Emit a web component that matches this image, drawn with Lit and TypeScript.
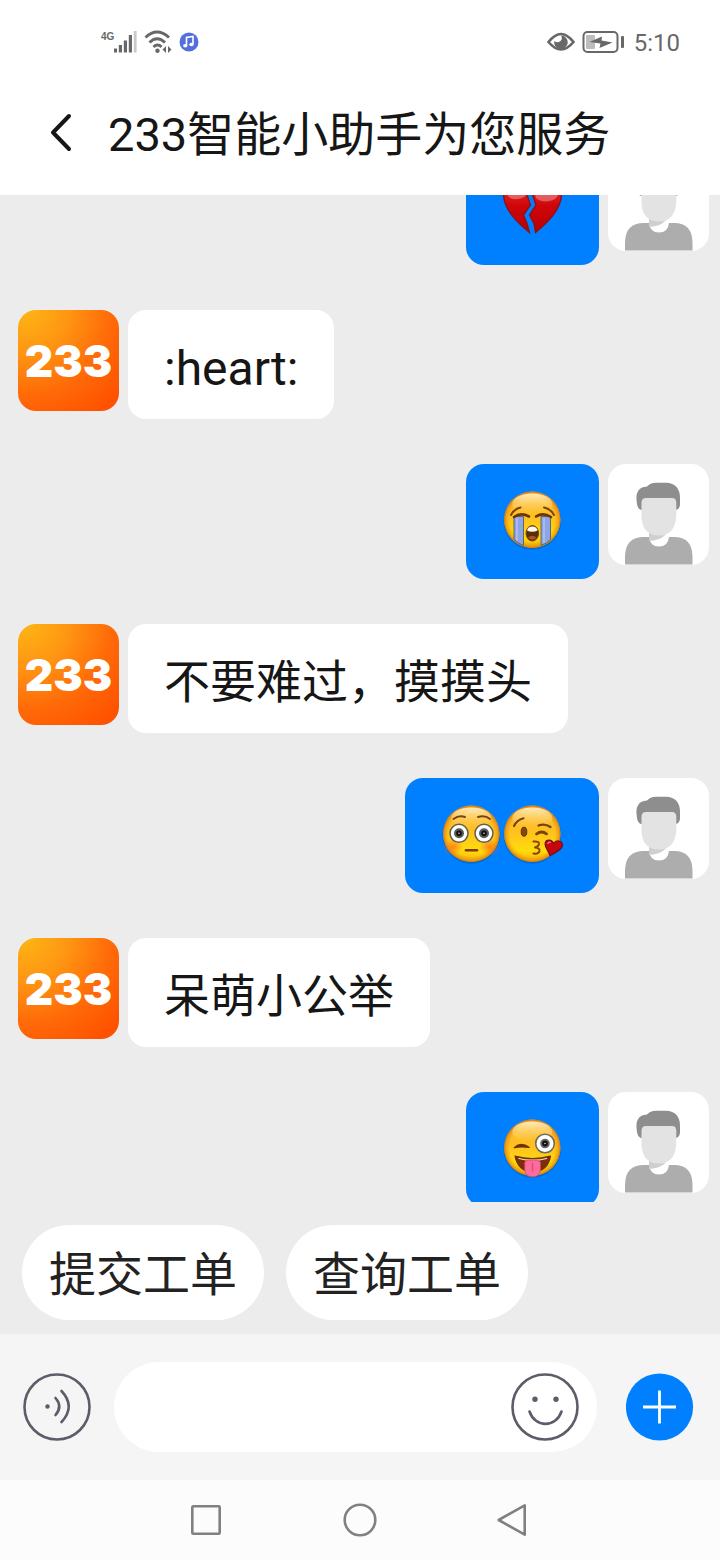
import { LitElement, html, svg, css, TemplateResult } from "lit";
import { customElement, property, state } from "lit/decorators.js";
import { classMap } from "lit/directives/class-map.js";

type EmojiName = "broken-heart" | "sob" | "flushed" | "kiss" | "wink-tongue";

interface Message {
  from: "bot" | "user";
  text?: string;
  emoji?: EmojiName[];
}

const MESSAGES: Message[] = [
  { from: "user", emoji: ["broken-heart"] },
  { from: "bot", text: ":heart:" },
  { from: "user", emoji: ["sob"] },
  { from: "bot", text: "不要难过，摸摸头" },
  { from: "user", emoji: ["flushed", "kiss"] },
  { from: "bot", text: "呆萌小公举" },
  { from: "user", emoji: ["wink-tongue"] },
];

const QUICK_ACTIONS = ["提交工单", "查询工单"];

const face = svg`
  <circle cx="30.3" cy="30" r="28.8" fill="#0a4a90" opacity="0.4"/>
  <circle cx="30.3" cy="28.8" r="28.2" fill="url(#skin)"/>
  <circle cx="30.3" cy="28.8" r="28.2" fill="url(#rim)"/>
  <ellipse cx="30.3" cy="13" rx="20" ry="10.5" fill="url(#shine)"/>`;

const EMOJI: Record<EmojiName, TemplateResult> = {
  "broken-heart": svg`
    <path d="M27.500 55.500C16 46 2 33 1.6 18C1.4 8 8 3 15 3C20 3 24 5 26 9L25 18L28.500 28L21.500 38L25 46.500Z" fill="url(#red)" stroke="#8e1019" stroke-width="1.4"/>
    <path d="M33.500 55.500C45 46 59 33 59.400 18C59.600 8 53 3 46 3C40 3 34 5 31 10L30.500 18L34 28L27.500 38L32 46.500Z" fill="url(#red)" stroke="#8e1019" stroke-width="1.4"/>
    <path d="M5 17C5 9 10 6 15 6C20 6 23 9 23 13L23.500 19C16 24 7 23 5 17Z" fill="#fff" opacity="0.3"/>
    <path d="M33 17C33 9 40 6 46 6C52 6 57 10 56 18C53 26 38 26 34 21Z" fill="#fff" opacity="0.3"/>`,
  sob: svg`
    ${face}
    <path d="M12 25.500H21.500V54.500Q16 52.500 12 48.500Z" fill="#8fa4e6" stroke="#5f6a62" stroke-width="1"/>
    <path d="M39 25.500H48.500V48.500Q45 52.500 39 54.500Z" fill="#8fa4e6" stroke="#5f6a62" stroke-width="1"/>
    <path d="M15 27V50M42 27V52" stroke="#b3c2f5" stroke-width="2" opacity="0.7"/>
    <path d="M12 26Q19 21 27 25.500M34 25.500Q41 21 49 26" fill="none" stroke="#6b3306" stroke-width="2.600" stroke-linecap="round"/>
    <path d="M9 24Q12 18 18.500 16.500M42 16.500Q49 18 52 24" fill="none" stroke="#7a430c" stroke-width="2" stroke-linecap="round"/>
    <ellipse cx="30.300" cy="42.300" rx="6.300" ry="7.700" fill="#5c2c0a" stroke="#7a430c"/>
    <path d="M25 39.500Q26 35.500 30.300 35.500Q34.600 35.500 35.600 39.500Q30.300 42 25 39.500Z" fill="#fffdf2"/>
    <path d="M26 46.500Q30 43 34.600 46.500Q30.500 51 26 46.500Z" fill="#a8581c"/>`,
  flushed: svg`
    ${face}
    <ellipse cx="12" cy="42" rx="10" ry="9" fill="url(#blush)"/>
    <ellipse cx="48.500" cy="42" rx="10" ry="9" fill="url(#blush)"/>
    <circle cx="18" cy="28.300" r="9" fill="#fff" stroke="#5f5f50" stroke-width="1.500"/>
    <circle cx="43" cy="28.300" r="9" fill="#fff" stroke="#5f5f50" stroke-width="1.500"/>
    <circle cx="18" cy="28.300" r="5" fill="#56595c"/><circle cx="18" cy="28.300" r="2.800" fill="#15100c"/>
    <circle cx="43" cy="28.300" r="5" fill="#56595c"/><circle cx="43" cy="28.300" r="2.800" fill="#15100c"/>
    <circle cx="18" cy="28.300" r="0.700" fill="#fff"/><circle cx="43" cy="28.300" r="0.700" fill="#fff"/>
    <path d="M12.500 14Q18 10 24 12M37 12Q44 10 49 14" fill="none" stroke="#7a430c" stroke-width="2" stroke-linecap="round"/>
    <path d="M25 45.300H36" stroke="#7a3a0a" stroke-width="2.600" stroke-linecap="round"/>`,
  kiss: svg`
    ${face}
    <ellipse cx="22" cy="26.700" rx="2.800" ry="4.500" fill="#84480c" stroke="#5e3008"/>
    <path d="M12 21Q15 15 21.500 13.300M36.500 20.500Q43 18 48.500 22" fill="none" stroke="#7a430c" stroke-width="2.200" stroke-linecap="round"/>
    <path d="M34.500 29Q39.500 25 44.500 28.800" fill="none" stroke="#7a430c" stroke-width="2.800" stroke-linecap="round"/>
    <path d="M31.500 36.500Q37.500 36 37 39Q36.500 41.500 33 42.500Q38 43 37.500 46Q36.500 49.500 31.500 48.500" fill="none" stroke="#85450c" stroke-width="2" stroke-linecap="round" stroke-linejoin="round"/>
    <path d="M48 50.500C46 45 42.500 42 43.200 38C44 34 50 34 51.500 38.500C54 34.500 60 35.500 60.500 39.500C60.800 44 54 47.500 48 50.500Z" fill="#c8040c" stroke="#721218" stroke-width="1.200"/>
    <path d="M45.500 39Q46.500 36.500 49 37.500" stroke="#f0807c" stroke-width="1.200" fill="none"/>`,
  "wink-tongue": svg`
    ${face}
    <path d="M12.500 28.500Q19 22.500 27 28.300Q19 27 12.500 28.500Z" fill="#6b3306" stroke="#6b3306" stroke-width="1.500" stroke-linejoin="round"/>
    <circle cx="43" cy="24.500" r="9.300" fill="#fff" stroke="#6d6d5a" stroke-width="1.600"/>
    <circle cx="43" cy="24.500" r="4.800" fill="#66696c"/><circle cx="43" cy="24.500" r="2.900" fill="#15100c"/>
    <circle cx="43" cy="24.500" r="0.700" fill="#fff"/>
    <path d="M13 37Q30.500 42 48.500 37Q46 52.500 30.500 53Q16 52.500 13 37Z" fill="#7c2d0a" stroke="#6b3306" stroke-width="1.200" stroke-linejoin="round"/>
    <path d="M16 38.700Q30.500 42.500 45.500 38.700L44.800 40Q30.500 44 16.800 40Z" fill="#f5dfb0"/>
    <path d="M22.800 43Q26 40 30.500 41.500Q35 40 38.300 43V51Q37.500 57.800 30.500 57.800Q23.500 57.800 22.800 51Z" fill="#ff6c9c" stroke="#d94a78" stroke-width="0.800"/>
    <path d="M30.500 44V52" stroke="#dd4b7e" stroke-width="1.400" stroke-linecap="round"/>`,
};

@customElement("chat-emoji")
export class ChatEmoji extends LitElement {
  @property() name: EmojiName = "sob";

  static styles = css`
    :host { display: block; width: 61px; height: 61px; }
    .art { display: block; width: 100%; height: 100%; overflow: visible; }
  `;

  render() {
    return html`<svg class="art" viewBox="0 0 61 61" role="img" aria-label=${this.name}>
      <defs>
        <linearGradient id="skin" x1="0" y1="0" x2="0" y2="1">
          <stop offset="0" stop-color="#fdb634"/>
          <stop offset="0.45" stop-color="#fec020"/>
          <stop offset="0.8" stop-color="#ffdc0a"/>
          <stop offset="1" stop-color="#f8b010"/>
        </linearGradient>
        <radialGradient id="rim">
          <stop offset="0.8" stop-color="#e8860c" stop-opacity="0"/>
          <stop offset="0.94" stop-color="#e8860c" stop-opacity="0.6"/>
          <stop offset="1" stop-color="#b8701c" stop-opacity="0.95"/>
        </radialGradient>
        <linearGradient id="shine" x1="0" y1="0" x2="0" y2="1">
          <stop offset="0" stop-color="#fff3cf" stop-opacity="0.9"/>
          <stop offset="1" stop-color="#ffd66a" stop-opacity="0"/>
        </linearGradient>
        <linearGradient id="red" x1="0" y1="0" x2="0" y2="1">
          <stop offset="0" stop-color="#e23a3a"/>
          <stop offset="0.5" stop-color="#cf0508"/>
          <stop offset="1" stop-color="#b80006"/>
        </linearGradient>
        <radialGradient id="blush">
          <stop offset="0" stop-color="#ff6a1c" stop-opacity="0.75"/>
          <stop offset="1" stop-color="#ff6a1c" stop-opacity="0"/>
        </radialGradient>
      </defs>
      ${EMOJI[this.name]}
    </svg>`;
  }
}

@customElement("chat-avatar")
export class ChatAvatar extends LitElement {
  @property() kind: "bot" | "user" = "user";

  static styles = css`
    :host { display: block; flex: none; width: 101px; height: 101px; border-radius: 18px; overflow: hidden; }
    .brand {
      display: flex; align-items: center; justify-content: center; height: 100%;
      background: radial-gradient(circle at 8% 0%, #fdb515 0%, #ff9412 32%, #ff6a08 62%, #ff5200 90%);
      color: #fff; font: 900 44px/1 Inter, sans-serif;
    }
    .person { display: block; width: 100%; height: 100%; background: #fff; }
  `;

  render() {
    if (this.kind === "bot") return html`<div class="brand">233</div>`;
    return html`<svg class="person" viewBox="0 0 101 101" role="img" aria-label="user">
      <path d="M17 100.500V93Q17 73 36 73H66Q84.500 73 84.500 93V100.500Z" fill="#adadad"/>
      <path d="M41 66H61V73Q60 82.500 51 82.500Q42 82.500 41 73Z" fill="#fff"/>
      <path d="M41 64H61Q58 76 41 77Z" fill="#cfcfcf"/>
      <path d="M29 40Q26 23 39 22.500Q42 18.700 48 18.700H59Q72 20 72 34V40Q72 45 68 46H34Q30 46 29 40Z" fill="#8e8e8e"/>
      <path d="M33.500 39Q33.500 34 38 34H64Q68.300 34 68.300 39V52Q67 71.500 51 71.500Q35 71.500 33.500 54Z" fill="#e3e3e3"/>
    </svg>`;
  }
}

@customElement("chat-message")
export class ChatMessage extends LitElement {
  @property({ attribute: false }) message!: Message;

  static styles = css`
    :host { display: block; }
    .row { display: flex; align-items: flex-start; gap: 9px; }
    .row.user { flex-direction: row-reverse; }
    .bubble {
      display: flex; padding: 27px 36px; border-radius: 18px; background: #fff; color: #161616;
      font: 46px/55px "Noto Sans CJK SC", sans-serif;
    }
    .row.user .bubble { background: #0080ff; }
    .bubble.latin { padding: 31px 36px 23px; font-family: Roboto, "Noto Sans CJK SC", sans-serif; font-size: 48px; }
  `;

  render() {
    const { from, text, emoji } = this.message;
    const latin = !!text && /^[\x20-\x7e]+$/.test(text);
    return html`<div class=${classMap({ row: true, user: from === "user" })}>
      <chat-avatar kind=${from}></chat-avatar>
      <div class=${classMap({ bubble: true, latin })}>
        ${text ?? emoji?.map((name) => html`<chat-emoji name=${name}></chat-emoji>`)}
      </div>
    </div>`;
  }
}

@customElement("status-bar")
export class StatusBar extends LitElement {
  static styles = css`
    :host {
      display: flex; align-items: center; justify-content: space-between;
      height: 84px; padding: 0 40px 0 101px; box-sizing: border-box;
      color: #686868; font-family: Roboto, "Noto Sans CJK SC", sans-serif;
    }
    .group { display: flex; align-items: center; gap: 7px; }
    .cell { display: flex; align-items: flex-start; }
    .net { font: bold 10px/11px "Liberation Sans", sans-serif; }
    .time { font-size: 24px; line-height: 28px; padding: 2px 0 0 2px; }
    svg { display: block; }
  `;

  render() {
    return html`
      <div class="group">
        <div class="cell">
          <span class="net">4G</span>
          <svg width="23" height="22" viewBox="0 0 23 22" fill="#686868">
            <rect x="0" y="17.500" width="3" height="4"/><rect x="4.800" y="14" width="3.200" height="7.500"/>
            <rect x="9.800" y="9.500" width="3.200" height="12"/><rect x="14.800" y="4" width="3.200" height="17.500"/>
            <rect x="19.800" y="0" width="2.800" height="21.500" fill="#c9c9c9"/>
          </svg>
        </div>
        <svg width="28" height="24" viewBox="0 0 28 24" fill="none" stroke="#686868" stroke-width="3">
          <path d="M1.500 7.500Q13 -3.500 25 7.500M5.500 12.500Q13 5 21 12.500M9.500 17Q13.500 13 17.500 17"/>
          <circle cx="13.500" cy="20.800" r="2.200" fill="#686868" stroke="none"/>
          <path d="M22 16V23L18.500 19.500ZM24 16V23L27.500 19.500Z" fill="#686868" stroke="none"/>
        </svg>
        <svg width="20" height="20" viewBox="0 0 20 20">
          <circle cx="10" cy="10" r="9.500" fill="#536fdc"/>
          <path d="M7.500 13.500V5.500L14 4.500V12" fill="none" stroke="#fff" stroke-width="1.600"/>
          <ellipse cx="6.300" cy="13.800" rx="2.200" ry="1.800" fill="#fff"/><ellipse cx="12.500" cy="12.500" rx="2.200" ry="1.800" fill="#fff"/>
        </svg>
      </div>
      <div class="group">
        <svg width="28" height="20" viewBox="0 0 28 20">
          <path d="M1.500 10Q14 -6 26.500 10Q14 25 1.500 10Z" fill="none" stroke="#686868" stroke-width="2.600"/>
          <path d="M14 3.500A6.800 6.800 0 1 1 7.300 9Q10.500 11.500 13.500 9Q16 6.500 14 3.500Z" fill="#686868"/>
        </svg>
        <svg width="43" height="22" viewBox="0 0 43 22">
          <rect x="1.500" y="1" width="34" height="20" rx="4" fill="none" stroke="#686868" stroke-width="2"/>
          <rect x="4" y="4" width="9" height="14" rx="1" fill="#bdbdbd"/>
          <path d="M7.500 11L20 5.500L19.500 9.500L30.500 11.500L17.500 17L18.500 12.500Z" fill="#686868"/>
          <rect x="39" y="5" width="3" height="12" rx="1" fill="#686868"/>
        </svg>
        <span class="time">5:10</span>
      </div>`;
  }
}

@customElement("app-root")
export class AppRoot extends LitElement {
  @state() private draft = "";

  static styles = css`
    :host {
      display: flex; flex-direction: column; height: 100vh; overflow: hidden;
      background: #ececec; font-family: "Noto Sans CJK SC", sans-serif; color: #161616;
    }
    * { box-sizing: border-box; }
    button { display: block; flex: none; margin: 0; padding: 0; border: 0; background: none; color: inherit; font: inherit; cursor: pointer; }
    svg { display: block; }
    .top { flex: none; background: #fff; }
    .title-bar { display: flex; align-items: center; gap: 34px; height: 111px; padding: 0 48px 15px; }
    .title { margin: 0; padding-top: 6px; font: 400 47px/56px Roboto, "Noto Sans CJK SC", sans-serif; white-space: nowrap; }
    .log { flex: 1; min-height: 0; display: flex; flex-direction: column; justify-content: flex-end; overflow: hidden; padding: 0 11px 0 18px; }
    .list { display: flex; flex-direction: column; gap: 45px; margin-bottom: -5px; }
    .quick { flex: none; display: flex; gap: 22px; padding: 23px 22px 14px; }
    .pill { padding: 18px 27px 21px; border-radius: 48px; background: #fff; color: #222; font-size: 47px; line-height: 56px; }
    .composer { flex: none; display: flex; align-items: center; gap: 23px; padding: 28px 26px 28px 23px; background: #f5f5f5; }
    .field { flex: 1; min-width: 0; display: flex; align-items: center; height: 90px; margin-right: 6px; padding: 0 18px 0 36px; border-radius: 45px; background: #fff; }
    .entry { flex: 1; min-width: 0; border: 0; outline: 0; background: none; font: inherit; font-size: 46px; line-height: 56px; }
    .line { fill: none; stroke: #5c5d69; stroke-width: 2.6; stroke-linecap: round; }
    .dot { fill: #5c5d69; }
    .nav { flex: none; display: flex; align-items: center; justify-content: center; gap: 119px; height: 80px; background: #fcfcfc; }
    .key { fill: none; stroke: #808080; stroke-width: 2.6; stroke-linejoin: round; }
  `;

  render() {
    return html`
      <header class="top">
        <status-bar></status-bar>
        <div class="title-bar">
          <button aria-label="返回">
            <svg width="26" height="40" viewBox="0 0 26 40"><path d="M21 4L5 20.500L21 37" fill="none" stroke="#161616" stroke-width="4" stroke-linecap="round" stroke-linejoin="round"/></svg>
          </button>
          <h1 class="title">233智能小助手为您服务</h1>
        </div>
      </header>
      <main class="log">
        <div class="list">
          ${MESSAGES.map((m) => html`<chat-message .message=${m}></chat-message>`)}
        </div>
      </main>
      <div class="quick">
        ${QUICK_ACTIONS.map((label) => html`<button class="pill">${label}</button>`)}
      </div>
      <div class="composer">
        <button aria-label="语音">
          <svg width="68" height="68" viewBox="0 0 68 68">
            <circle class="line" cx="34" cy="34" r="32.500"/>
            <circle class="dot" cx="24.500" cy="33.500" r="2.200"/>
            <path class="line" d="M32.500 25Q40 33.500 32.500 42M38.500 18Q53 33.500 38.500 49"/>
          </svg>
        </button>
        <div class="field">
          <input class="entry" type="text" aria-label="消息" .value=${this.draft}
            @input=${(e: Event) => (this.draft = (e.target as HTMLInputElement).value)} />
          <button aria-label="表情">
            <svg width="68" height="68" viewBox="0 0 68 68">
              <circle class="line" cx="34" cy="34" r="32.500"/>
              <circle class="dot" cx="24" cy="26.300" r="2.700"/><circle class="dot" cx="45" cy="26.300" r="2.700"/>
              <path class="line" d="M18.500 38.500C24 55 45 55 50.500 38.500"/>
            </svg>
          </button>
        </div>
        <button aria-label="更多">
          <svg width="68" height="68" viewBox="0 0 68 68">
            <circle cx="33.500" cy="34" r="33.600" fill="#0080ff"/>
            <path d="M17 34H50M33.500 17.500V50.500" stroke="#fff" stroke-width="2.800"/>
          </svg>
        </button>
      </div>
      <nav class="nav" aria-label="系统导航">
        <button aria-label="最近任务"><svg width="34" height="34" viewBox="0 0 34 34"><rect class="key" x="2.300" y="3.300" width="27.400" height="27.400" rx="1"/></svg></button>
        <button aria-label="主屏幕"><svg width="34" height="34" viewBox="0 0 34 34"><circle class="key" cx="17" cy="17" r="15.300"/></svg></button>
        <button aria-label="返回上一页"><svg width="34" height="34" viewBox="0 0 34 34"><path class="key" d="M28.700 2.300V31.700L2.700 17Z"/></svg></button>
      </nav>`;
  }
}
